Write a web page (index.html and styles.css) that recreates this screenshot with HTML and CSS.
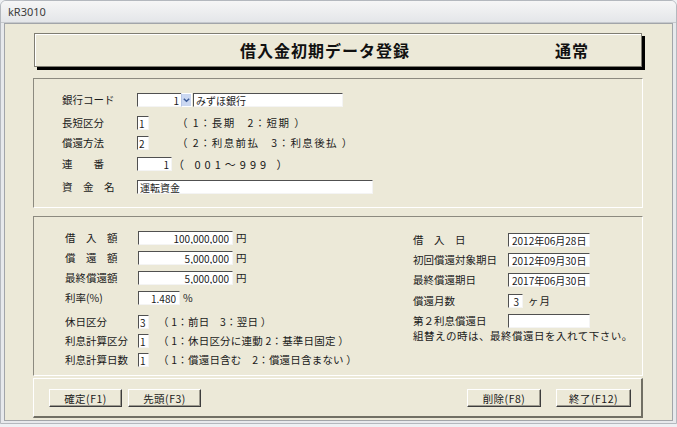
FILE: index.html
```html
<!DOCTYPE html>
<html lang='ja'>
<head>
    <meta charset='UTF-8'>
    <title>kR3010</title>
    <link rel="stylesheet" href="styles.css">
</head>
<body>
    <div class='window'>
        <div class='titlebar'>kR3010</div>
        <div class='frame'>
            <div class='client'>
                <!-- Header -->
                <div class='header'>
                    <h1 class='header-title'>借入金初期データ登録</h1>
                    <span class='header-mode'>通常</span>
                </div>

                <!-- Bank info -->
                <div class='panel panel-bank'>
                    <div class='field'>
                        <label class='label label-bank'>銀行コード</label>
                        <div class='combo'>
                            <input class='input input-combo' value='1' readonly>
                            <span class='combo-arrow'>
                                <svg width='10' height='12' viewBox='0 0 10 12'>
                                    <path d='M2 4.5 L5 7.5 L8 4.5' fill='none' stroke='#3d5c99' stroke-width='1.6'/>
                                </svg>
                            </span>
                        </div>
                        <input class='input input-bankname' value='みずほ銀行' readonly>
                    </div>
                    <div class='field'>
                        <label class='label label-bank'>長短区分</label>
                        <input class='input input-digit' value='1' readonly>
                        <span class='note note-top'>（ 1：長期　2：短期 ）</span>
                    </div>
                    <div class='field'>
                        <label class='label label-bank'>償還方法</label>
                        <input class='input input-digit' value='2' readonly>
                        <span class='note note-top'>（ 2：利息前払　3：利息後払 ）</span>
                    </div>
                    <div class='field'>
                        <label class='label label-bank'>連　　番</label>
                        <input class='input input-serial' value='1' readonly>
                        <span class='note note-serial'>（ 001～999 ）</span>
                    </div>
                    <div class='field'>
                        <label class='label label-bank'>資　金　名</label>
                        <input class='input input-fund' value='運転資金' readonly>
                    </div>
                </div>

                <!-- Loan details -->
                <div class='panel panel-loan'>
                    <div class='loan-left'>
                        <div class='field'>
                            <label class='label label-left'>借　入　額</label>
                            <input class='input input-amount' value='100,000,000' readonly>
                            <span class='unit'>円</span>
                        </div>
                        <div class='field'>
                            <label class='label label-left'>償　還　額</label>
                            <input class='input input-amount' value='5,000,000' readonly>
                            <span class='unit'>円</span>
                        </div>
                        <div class='field'>
                            <label class='label label-left'>最終償還額</label>
                            <input class='input input-amount' value='5,000,000' readonly>
                            <span class='unit'>円</span>
                        </div>
                        <div class='field'>
                            <label class='label label-left'>利率(%)</label>
                            <input class='input input-rate' value='1.480' readonly>
                            <span class='unit'>%</span>
                        </div>
                        <div class='field'>
                            <label class='label label-left'>休日区分</label>
                            <input class='input input-flag' value='3' readonly>
                            <span class='note note-bottom'>（ 1：前日　3：翌日 ）</span>
                        </div>
                        <div class='field'>
                            <label class='label label-left'>利息計算区分</label>
                            <input class='input input-flag' value='1' readonly>
                            <span class='note note-bottom'>（ 1：休日区分に連動 2：基準日固定 ）</span>
                        </div>
                        <div class='field'>
                            <label class='label label-left'>利息計算日数</label>
                            <input class='input input-flag' value='1' readonly>
                            <span class='note note-bottom'>（ 1：償還日含む　2：償還日含まない ）</span>
                        </div>
                    </div>
                    <div class='loan-right'>
                        <div class='field'>
                            <label class='label label-right'>借　入　日</label>
                            <input class='input input-date' value='2012年06月28日' readonly>
                        </div>
                        <div class='field'>
                            <label class='label label-right'>初回償還対象期日</label>
                            <input class='input input-date' value='2012年09月30日' readonly>
                        </div>
                        <div class='field'>
                            <label class='label label-right'>最終償還期日</label>
                            <input class='input input-date' value='2017年06月30日' readonly>
                        </div>
                        <div class='field'>
                            <label class='label label-right'>償還月数</label>
                            <input class='input input-months' value='3' readonly>
                            <span class='unit unit-months'>ヶ月</span>
                        </div>
                        <div class='field'>
                            <label class='label label-right'>第２利息償還日</label>
                            <input class='input input-date' value='' readonly>
                        </div>
                        <p class='message'>組替えの時は、最終償還日を入れて下さい。</p>
                    </div>
                </div>

                <!-- Function keys -->
                <div class='button-bar'>
                    <div class='button-group'>
                        <button class='btn btn-left'>確定(F1)</button>
                        <button class='btn btn-left'>先頭(F3)</button>
                    </div>
                    <div class='button-group button-group-right'>
                        <button class='btn btn-delete'>削除(F8)</button>
                        <button class='btn btn-exit'>終了(F12)</button>
                    </div>
                </div>
            </div>
        </div>
    </div>
</body>
</html>
```

FILE: styles.css
```css
* {
    box-sizing: border-box;
    margin: 0;
    padding: 0;
}

body {
    width: 677px;
    height: 427px;
    overflow: hidden;
    background-color: #eef0f3;
    font-family: 'Noto Sans CJK JP', 'Noto Sans', sans-serif;
    font-size: 10.5px;
    color: #1a1a1a;
}

/* Window chrome */
.window {
    width: 677px;
    height: 424px;
    border: 1px solid #b4b8be;
    border-radius: 6px 6px 0 0;
    background-color: #e7e9ec;
    display: flex;
    flex-direction: column;
}

.titlebar {
    height: 22px;
    padding-left: 7px;
    display: flex;
    align-items: center;
    font-family: 'Noto Sans', sans-serif;
    font-size: 11px;
    color: #3c3c3c;
    background: linear-gradient(#f6f6f6, #e4e6e9);
    border-radius: 5px 5px 0 0;
    border-bottom: 1px solid #c6c9cd;
}

.frame {
    flex: 1;
    display: flex;
    padding: 0 3px 2px 3px;
}

.client {
    flex: 1;
    background-color: #ece9d8;
    border: 1px solid #a2a5a9;
    padding: 9px 0 0 28px;
}

/* Header */
.header {
    width: 608px;
    height: 34px;
    margin-left: 1px;
    display: flex;
    align-items: center;
    padding: 0 52px 0 205px;
    border: 1px solid #7f7d72;
    box-shadow: inset 1px 1px 0 #ffffff, 3px 3px 0 #000000;
}

.header-title {
    font-size: 16px;
    font-weight: 700;
    letter-spacing: 1px;
    color: #111111;
}

.header-mode {
    margin-left: auto;
    font-size: 16px;
    font-weight: 700;
    letter-spacing: 1px;
    color: #111111;
}

/* Panels */
.panel {
    width: 610px;
    border: 1px solid;
    border-color: #8c8a7f #ffffff #ffffff #8c8a7f;
}

.panel-bank {
    height: 130px;
    margin-top: 11px;
    padding: 14px 0 0 28px;
    display: grid;
    grid-template-rows: 23px 20px 21px 23px 14px;
}

.panel-loan {
    height: 160px;
    margin-top: 8px;
    padding: 14px 0 0 31px;
    display: flex;
}

.loan-left {
    width: 348px;
    display: grid;
    grid-template-rows: 20px 20px 20px 24px 19px 19px 14px;
    align-content: start;
}

.loan-right {
    padding-top: 2px;
    display: grid;
    grid-template-rows: 20px 20px 21px 20px 14px auto;
    align-content: start;
}

.field {
    height: 14px;
    line-height: 14px;
    display: flex;
    align-items: center;
}

.label {
    flex-shrink: 0;
    white-space: nowrap;
}

.label-bank {
    width: 75px;
}

.label-left {
    width: 73px;
}

.label-right {
    width: 95px;
}

/* Inputs */
.input {
    height: 14px;
    padding: 0 2px;
    border: 1px solid;
    border-color: #505050 #f4f4f4 #f4f4f4 #505050;
    background-color: #ffffff;
    font-family: 'Noto Sans CJK JP', sans-serif;
    font-size: 10px;
    color: #1a1a1a;
    outline: none;
}

.combo {
    display: flex;
}

.input-combo {
    width: 44px;
    text-align: right;
    border-right: none;
}

.combo-arrow {
    width: 11px;
    height: 14px;
    display: flex;
    align-items: center;
    justify-content: center;
    background-color: #cbd8f2;
    border: 1px solid #ffffff;
    border-left-color: #b7c6e6;
}

.input-bankname {
    width: 150px;
    margin-left: 1px;
}

.input-digit {
    width: 12px;
    padding: 0 1px;
}

.input-serial {
    width: 35px;
    text-align: right;
}

.input-fund {
    width: 236px;
}

.input-amount {
    width: 95px;
    text-align: right;
    padding-right: 3px;
}

.input-rate {
    width: 42px;
    text-align: right;
    padding-right: 3px;
}

.input-flag {
    width: 11px;
    padding: 0 1px;
}

.input-date {
    width: 82px;
    padding-left: 3px;
}

.input-months {
    width: 15px;
    text-align: right;
    padding-right: 3px;
}

/* Texts next to inputs */
.unit {
    margin-left: 3px;
}

.unit-months {
    margin-left: 5px;
    letter-spacing: 1px;
}

.note {
    white-space: nowrap;
}

.note-top {
    margin-left: 28px;
    letter-spacing: 1.4px;
}

.note-serial {
    margin-left: 1px;
    font-size: 11px;
    letter-spacing: 4px;
}

.note-bottom {
    margin-left: 9px;
    letter-spacing: 0.2px;
}

.message {
    margin-top: 2px;
    line-height: 11px;
    letter-spacing: 0.5px;
    white-space: nowrap;
}

/* Button bar */
.button-bar {
    width: 610px;
    height: 40px;
    margin-top: 2px;
    padding: 10px 10px 0 15px;
    display: flex;
    justify-content: space-between;
    border-style: solid;
    border-width: 1px 2px 2px 1px;
    border-color: #ffffff #716f64 #716f64 #ffffff;
}

.button-group {
    display: flex;
    gap: 6px;
}

.button-group-right {
    gap: 15px;
}

.btn {
    height: 18px;
    display: flex;
    align-items: center;
    justify-content: center;
    border: 1px solid;
    border-color: #ffffff #3d3d3d #3d3d3d #ffffff;
    box-shadow: inset -1px -1px 0 #9d9a8e;
    background-color: #ece9d8;
    font-family: 'Noto Sans CJK JP', sans-serif;
    font-size: 10.5px;
    letter-spacing: 0.5px;
    color: #1a1a1a;
    cursor: pointer;
}

.btn-left {
    width: 73px;
}

.btn-delete {
    width: 74px;
}

.btn-exit {
    width: 75px;
}
```
